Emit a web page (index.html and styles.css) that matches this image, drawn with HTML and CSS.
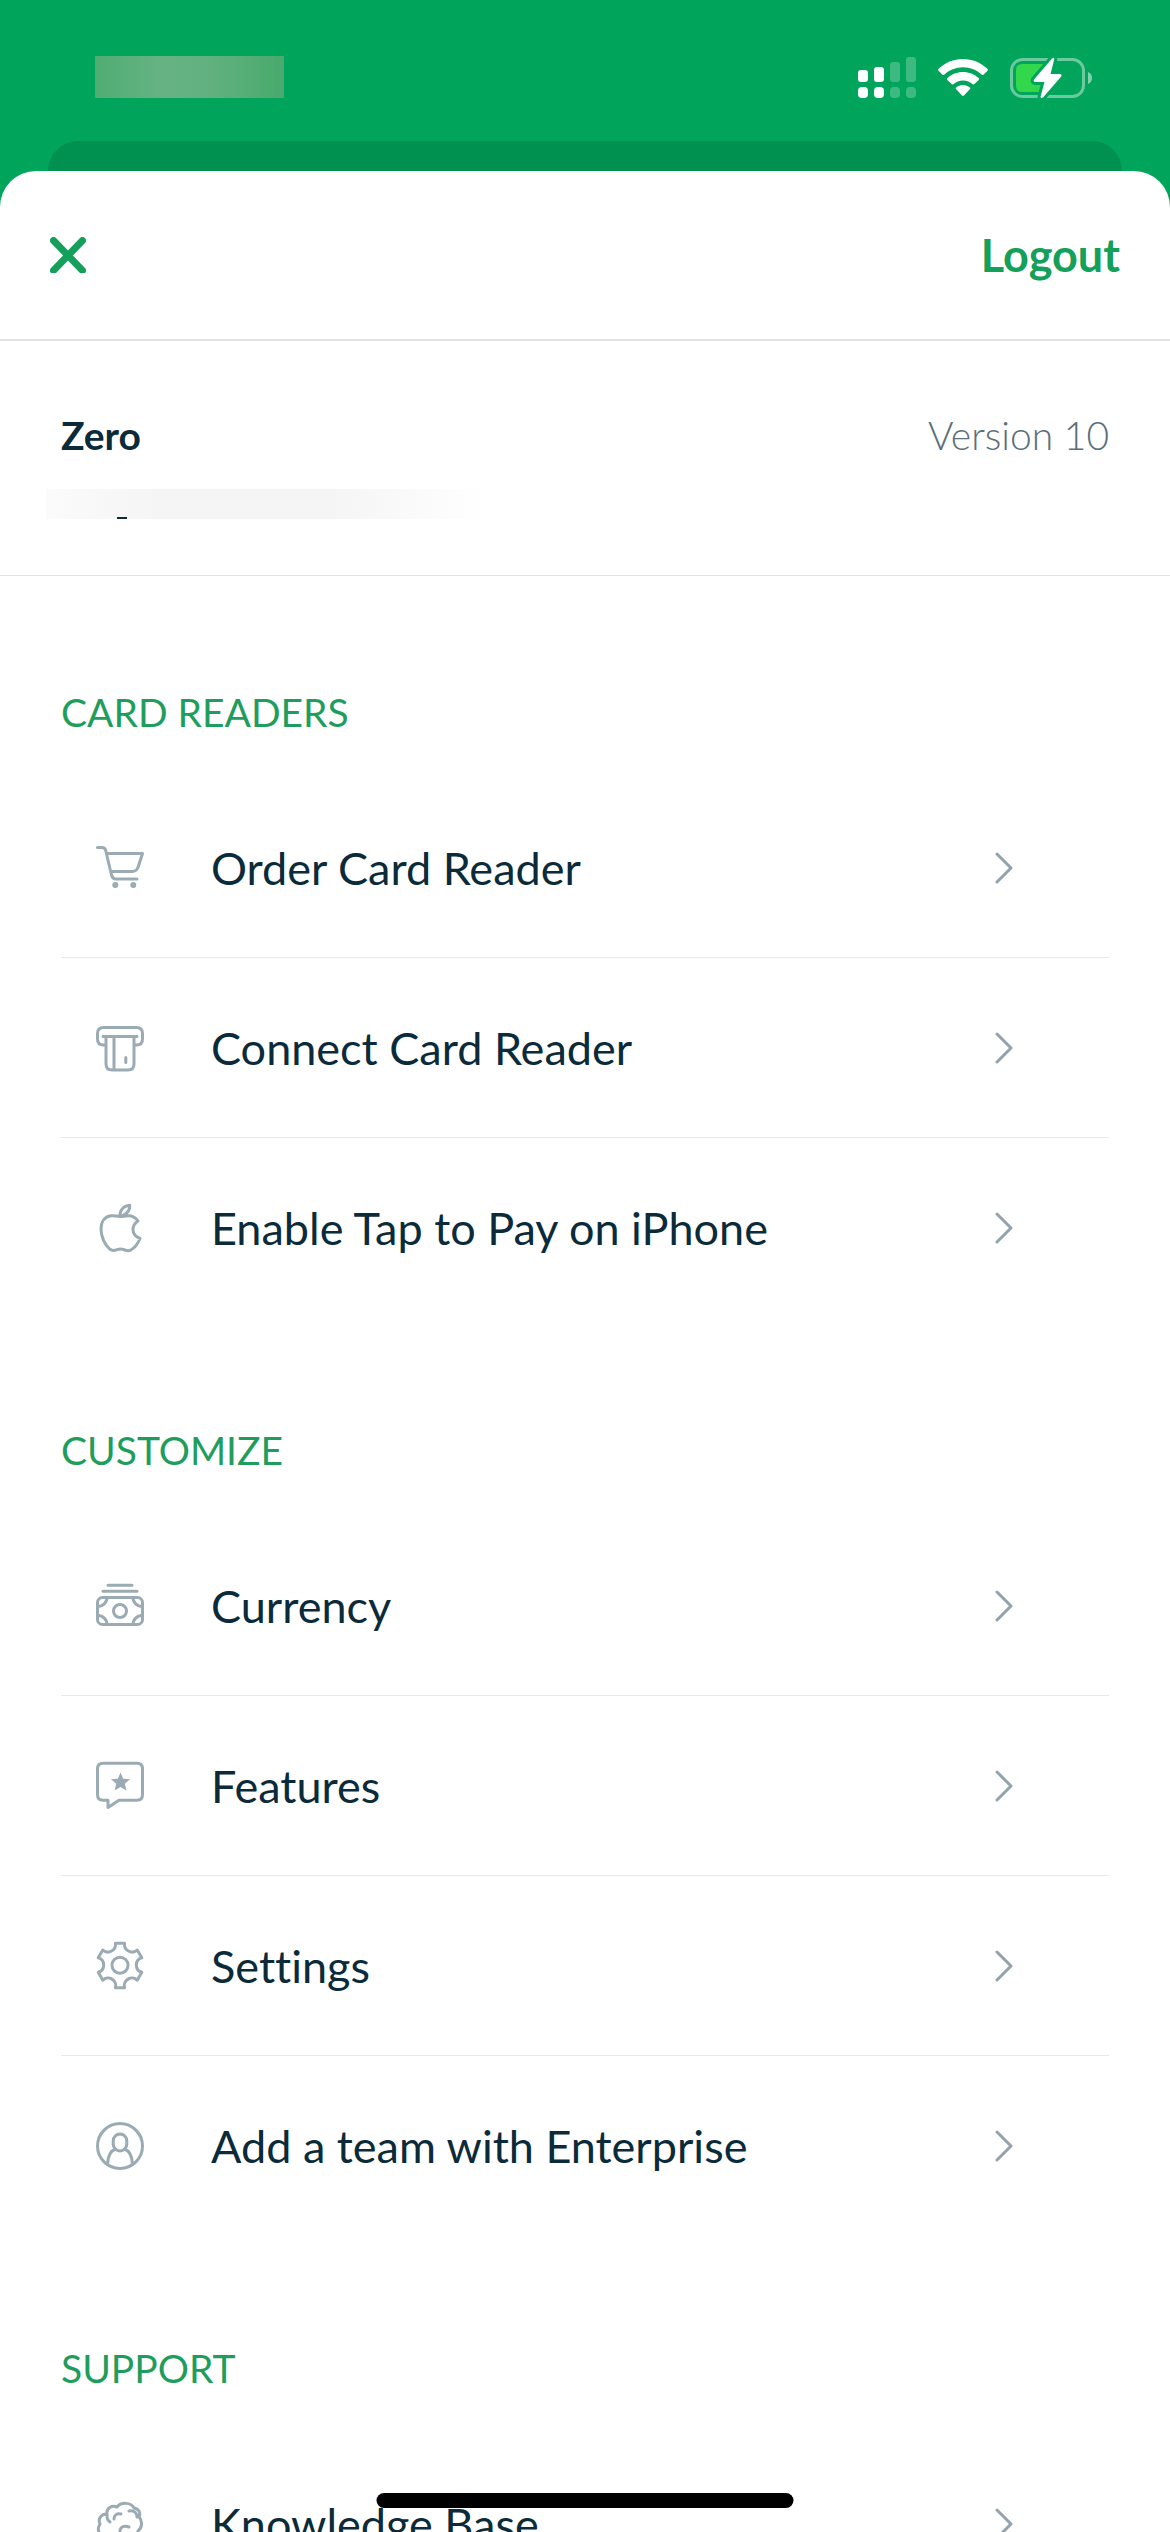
FILE: index.html
```
<!DOCTYPE html>
<html lang="en">
<head>
  <meta charset="UTF-8">
  <meta name="viewport" content="width=device-width, initial-scale=1.0">
  <title>Account</title>
  <link rel="stylesheet" href="styles.css">
</head>
<body>
  <header class="status-bar">
    <span class="status-time"></span>
    <div class="status-icons">
      <svg class="signal" viewBox="0 0 58 41" aria-hidden="true">
        <rect x="0" y="13" width="10" height="12" rx="3"/>
        <rect x="16" y="10" width="10" height="15" rx="3"/>
        <rect x="0" y="30" width="10" height="11" rx="4"/>
        <rect x="16" y="30" width="10" height="11" rx="4"/>
        <g opacity=".24">
          <rect x="32" y="5" width="10" height="20" rx="3"/>
          <rect x="48" y="0" width="10" height="25" rx="3"/>
          <rect x="32" y="30" width="10" height="11" rx="4"/>
          <rect x="48" y="30" width="10" height="11" rx="4"/>
        </g>
      </svg>
      <svg class="wifi" viewBox="0 0 50 38" aria-hidden="true">
        <path d="M25 0C15.500 0 7 3.700.600 9.800c-.6.600-.6 1.300-.1 1.900l4 4c.5.500 1.200.500 1.700 0C11.200 11.200 17.800 8.300 25 8.300s13.800 2.900 18.800 7.400c.5.500 1.200.500 1.700 0l4-4c.5-.6.500-1.300-.1-1.900C43 3.700 34.500 0 25 0z"/>
        <path d="M25 13c-6 0-11.500 2.300-15.600 6.100-.6.600-.6 1.200-.1 1.800l4.300 4.200c.5.500 1.200.500 1.700.1C17.900 22.900 21.300 21.400 25 21.400s7.100 1.500 9.700 3.800c.5.400 1.200.400 1.700-.1l4.300-4.200c.5-.6.500-1.200-.1-1.800C36.500 15.300 31 13 25 13z"/>
        <path d="M25 26c-2.600 0-5 .9-6.900 2.400-.6.500-.6 1.200-.1 1.700l6 6.400c.6.600 1.400.6 2 0l6-6.400c.5-.5.5-1.200-.1-1.700C30 26.900 27.600 26 25 26z"/>
      </svg>
      <svg class="battery" viewBox="0 0 82 42" aria-hidden="true">
        <rect x="1.500" y="2.500" width="72" height="37" rx="11" fill="none" stroke="#fff" stroke-opacity=".42" stroke-width="3"/>
        <path d="M78 15c2.600 1 4 3.300 4 6s-1.400 5-4 6z" fill-opacity=".5"/>
        <path d="M12 7h26L24 24v4h12l-3 7H12q-6 0-6-6V13q0-6 6-6z" fill="#32d74b"/>
        <path d="M42 1.500q2.500-2 2.200 1L40.500 17H50q2.500.500 1 2.700L33 40.500q-2.700 1.700-2.400-1L34.500 25H25q-2-.500-1-2.500z" stroke="#00a45b" stroke-width="6" paint-order="stroke"/>
      </svg>
    </div>
  </header>

  <div class="sheet-behind"></div>

  <main class="sheet">
    <div class="toolbar">
      <button class="close" type="button" aria-label="Close">
        <svg viewBox="0 0 36 36" aria-hidden="true"><path d="M3.500 3.500l29 30M32.500 3.500l-29 30"/></svg>
      </button>
      <button class="logout" type="button">Logout</button>
    </div>

    <section class="profile">
      <div class="profile-row">
        <h1>Zero</h1>
        <span class="version">Version 10</span>
      </div>
      <div class="profile-email"></div>
    </section>

    <div class="menu">
      <section>
        <h2>CARD READERS</h2>
        <ul>
          <li>
            <a href="#order">
              <svg class="icon" viewBox="0 0 48 48" aria-hidden="true">
                <path d="M1.500 3.500H6c2.200 0 3.200 1 3.700 3l5.800 24.500c.8 3 1.700 4 4.300 4H41M11 9.500h35.500l-4.300 13.300c-1.300 3.700-2.600 4.700-6 4.700H15"/>
                <g class="solid"><circle cx="19.300" cy="41" r="3"/><circle cx="37.300" cy="41" r="3"/></g>
              </svg>
              <span>Order Card Reader</span>
              <svg class="chevron" viewBox="0 0 18 32" aria-hidden="true"><path d="M2 2l14 14L2 30"/></svg>
            </a>
          </li>
          <li>
            <a href="#connect">
              <svg class="icon" viewBox="0 0 48 48" aria-hidden="true">
                <path d="M10 21H7.500c-4 0-6-2-6-6V9.500c0-4 2-6 6-6h33c4 0 6 2 6 6V15c0 4-2 6-6 6H38M7 12.500h34M10 12.500V40c0 4 2 6 6 6h16c4 0 6-2 6-6V12.500M18 12.500V46M29.800 33.500v5"/>
              </svg>
              <span>Connect Card Reader</span>
              <svg class="chevron" viewBox="0 0 18 32" aria-hidden="true"><path d="M2 2l14 14L2 30"/></svg>
            </a>
          </li>
          <li>
            <a href="#tap-to-pay">
              <svg class="icon" viewBox="0 0 48 48" aria-hidden="true">
                <path d="M24 12.500c-3.200 0-5.500-1.200-9-.8C8.500 12.500 5 18 5 25c0 8 4 16 9 20.300 4 3 6.300-.3 10.500-.3s6 3 10 1.200C39 43.800 42 39.500 44 34.500c-4.800-2-7-5.200-7-9 0-3.600 1.600-6.300 5-8.500-3-4.200-6.500-5.500-10.500-5.200-2.800.2-4.800.7-7.500.7zM24 12c-.3-6 3.500-10 9.700-10.700C34 7 30 11.500 24 12z"/>
              </svg>
              <span>Enable Tap to Pay on iPhone</span>
              <svg class="chevron" viewBox="0 0 18 32" aria-hidden="true"><path d="M2 2l14 14L2 30"/></svg>
            </a>
          </li>
        </ul>
      </section>

      <section>
        <h2>CUSTOMIZE</h2>
        <ul>
          <li>
            <a href="#currency">
              <svg class="icon" viewBox="0 0 48 48" aria-hidden="true">
                <path d="M12 3.300h24M7 9.300h34"/>
                <rect x="1.500" y="15.500" width="45" height="27" rx="5"/>
                <circle cx="24" cy="29" r="6.500"/>
                <path d="M11 15.500c0 5-4 9-9.500 9M37 15.500c0 5 4 9 9.500 9M11 42.500c0-5-4-9-9.500-9M37 42.500c0-5 4-9 9.500-9"/>
              </svg>
              <span>Currency</span>
              <svg class="chevron" viewBox="0 0 18 32" aria-hidden="true"><path d="M2 2l14 14L2 30"/></svg>
            </a>
          </li>
          <li>
            <a href="#features">
              <svg class="icon" viewBox="0 0 48 48" aria-hidden="true">
                <path d="M7 1.200h34c3.500 0 5.500 2 5.500 5.500v26c0 3.500-2 5.500-5.500 5.500H23L12 45.500v-7.300H7c-3.500 0-5.500-2-5.500-5.500v-26C1.500 3.200 3.500 1.200 7 1.200z"/>
                <path class="solid" d="M24.500 10.500l2.700 6.200 6.800.6-5.200 4.500 1.600 6.700-5.900-3.500-5.900 3.500 1.600-6.700-5.200-4.500 6.800-.6z"/>
              </svg>
              <span>Features</span>
              <svg class="chevron" viewBox="0 0 18 32" aria-hidden="true"><path d="M2 2l14 14L2 30"/></svg>
            </a>
          </li>
          <li>
            <a href="#settings">
              <svg class="icon" viewBox="0 0 48 48" aria-hidden="true">
                <path d="M19.400 1.200h9.200A7.600 7.600 0 0 0 41.200 8l4.600 7.700a7.600 7.600 0 0 0 0 14.600L41.200 38.200a7.600 7.600 0 0 0-12.600 7.600h-9.200A7.600 7.600 0 0 0 6.800 38.200L2.200 30.300a7.600 7.600 0 0 0 0-14.600L6.800 8A7.600 7.600 0 0 0 19.400 1.200z"/>
                <circle cx="24" cy="23.200" r="8"/>
              </svg>
              <span>Settings</span>
              <svg class="chevron" viewBox="0 0 18 32" aria-hidden="true"><path d="M2 2l14 14L2 30"/></svg>
            </a>
          </li>
          <li>
            <a href="#team">
              <svg class="icon" viewBox="0 0 48 48" aria-hidden="true">
                <circle cx="24" cy="24" r="22.500"/>
                <rect x="17.200" y="12" width="13.600" height="17" rx="6.800"/>
                <path d="M11.500 42.500c.3-8 2.500-13.500 8-15.500M36.500 42.500c-.3-8-2.500-13.500-8-15.500"/>
              </svg>
              <span>Add a team with Enterprise</span>
              <svg class="chevron" viewBox="0 0 18 32" aria-hidden="true"><path d="M2 2l14 14L2 30"/></svg>
            </a>
          </li>
        </ul>
      </section>

      <section>
        <h2>SUPPORT</h2>
        <ul>
          <li>
            <a href="#knowledge-base">
              <svg class="icon" viewBox="0 0 48 48" aria-hidden="true">
                <path d="M11 14c-1-6 5-9 10-7 4-5 14-5 17 1 5 1 7 5 5 9 4 4 3 11-1 14 0 5-5 8-10 7l-2 8M11 14c-7 0-9 6-7 10-4 6 0 13 6 13l4 9M11 14c0 4 0 6 3 8M18 19c0-4 3-6 7-5M33 11c5-1 8 2 8 6M24 31c0-4 4-6 9-4"/>
              </svg>
              <span>Knowledge Base</span>
              <svg class="chevron" viewBox="0 0 18 32" aria-hidden="true"><path d="M2 2l14 14L2 30"/></svg>
            </a>
          </li>
        </ul>
      </section>
    </div>
  </main>

  <div class="home-indicator"></div>
</body>
</html>
```
FILE: styles.css
```
*{margin:0;padding:0;box-sizing:border-box;}
body{display:flex;flex-direction:column;height:100vh;overflow:hidden;background:#00a45b;color:#0b2b3a;font-family:Lato, "Open Sans", sans-serif;font-variant-ligatures:none;}
ul{list-style:none;}
button{border:0;background:none;color:#14a05a;font-family:inherit;cursor:pointer;}

.status-bar{display:flex;flex:none;justify-content:space-between;align-items:center;height:141px;padding:14px 78px 0 95px;}
.status-time{width:189px;height:42px;margin-bottom:2px;background:linear-gradient(90deg, #4fad72, #66b283 35%, #62b180 60%, #48aa6c);}
.status-icons{display:flex;align-items:center;gap:22px;fill:#fff;}
.signal{width:58px;height:41px;}
.wifi{width:50px;height:38px;}
.battery{width:82px;height:42px;}

.sheet-behind{flex:none;height:30px;margin:0 48px;border-radius:30px 30px 0 0;background:#00904f;}
.sheet{flex:1;min-height:0;overflow:hidden;border-radius:36px 36px 0 0;background:#fff;}

.toolbar{display:flex;justify-content:space-between;align-items:center;height:170px;padding:0 50px;border-bottom:2px solid #e0e3e4;}
.close{width:36px;height:36px;}
.close svg{display:block;fill:none;stroke:#14a05a;stroke-width:7;stroke-linecap:round;}
.logout{font-size:45px;font-weight:700;line-height:56px;}

.profile{height:235px;padding:66px 61px 0;border-bottom:1px solid #e0e3e4;}
.profile-row{display:flex;justify-content:space-between;line-height:56px;}
h1{font-size:39px;font-weight:700;}
.version{color:#5b6f7a;font-size:39px;font-weight:300;}
.profile-email{width:440px;height:30px;margin:26px 0 0 -15px;padding:28px 0 0 71px;background:linear-gradient(90deg, #fbfbfb, #f5f5f5 25%, #f5f5f5 65%, #fff);}
.profile-email::before{content:"";display:block;width:10px;height:2px;background:#0b2b3a;}

.menu{padding:4px 61px 0;}
h2{padding:104px 0 38px;color:#1f9d5d;font-size:39px;font-weight:400;line-height:56px;}
li{height:180px;border-bottom:1px solid #e6e9ea;}
li:last-child{border-bottom:0;}
li a{display:flex;align-items:center;height:100%;padding:0 96px 0 35px;color:inherit;font-size:45px;line-height:56px;text-decoration:none;}
li span{flex:1;margin-left:67px;}
.icon{width:48px;height:48px;fill:none;stroke:#9aabb3;stroke-width:3;stroke-linecap:round;stroke-linejoin:round;overflow:visible;}
.icon .solid{fill:#9aabb3;stroke:none;}
.chevron{width:18px;height:32px;fill:none;stroke:#93a3ab;stroke-width:3;stroke-linecap:round;stroke-linejoin:round;}

.home-indicator{position:fixed;bottom:24px;left:50%;width:417px;height:15px;border-radius:8px;background:#000;transform:translateX(-50%);}
```
